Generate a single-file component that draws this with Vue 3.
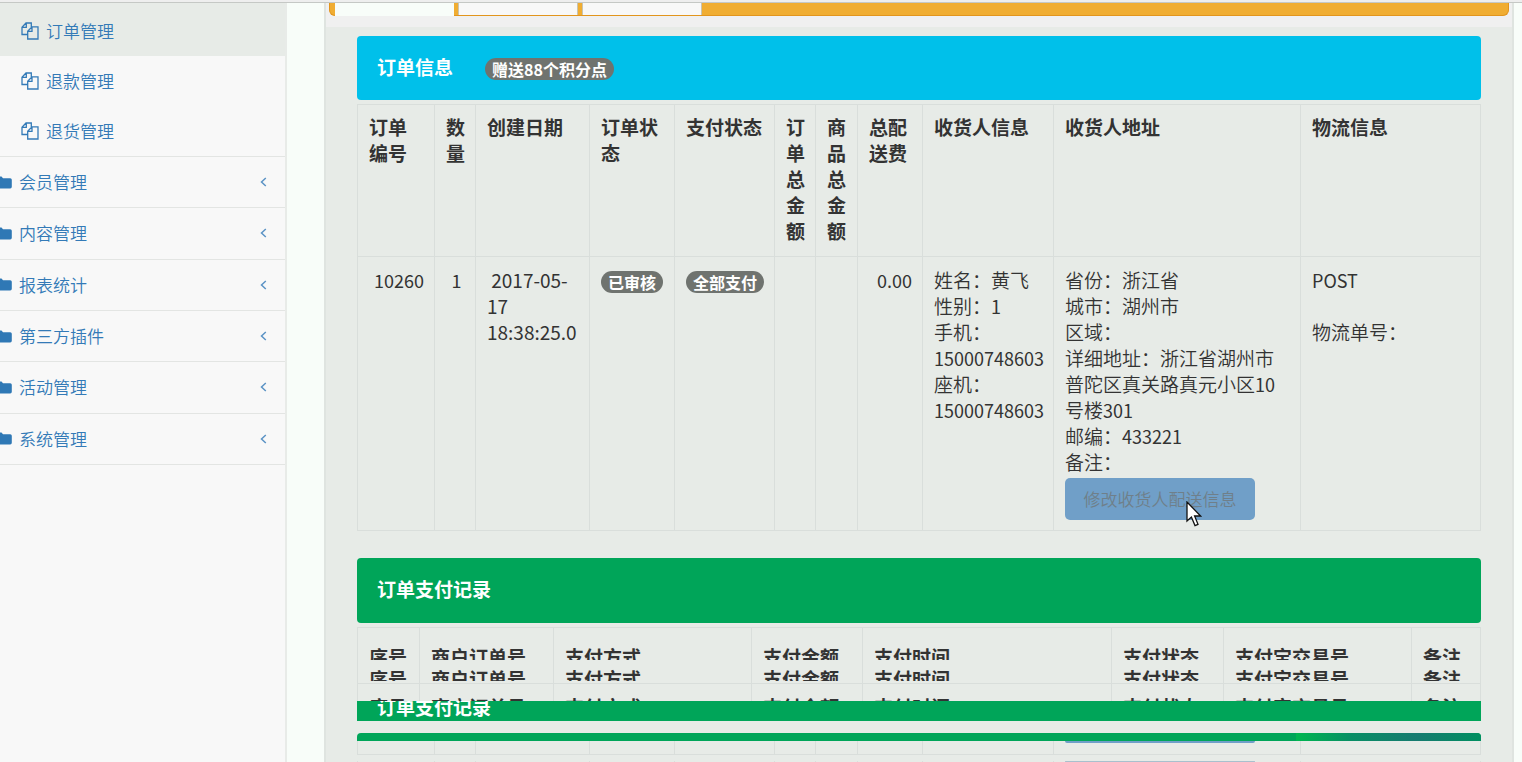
<script setup>
const orderLinks = ['订单管理', '退款管理', '退货管理']
const groups = ['会员管理', '内容管理', '报表统计', '第三方插件', '活动管理', '系统管理']
const orderColumns = [
  ['c-no', '订单编号'], ['c-qty', '数量'], ['c-date', '创建日期'], ['c-state', '订单状态'],
  ['c-pay', '支付状态'], ['c-sum', '订单总金额'], ['c-goods', '商品总金额'], ['c-fee', '总配送费'],
  ['c-person', '收货人信息'], ['c-address', '收货人地址'], ['c-ship', '物流信息'],
]
const payColumns = [
  ['p-seq', '序号'], ['p-order', '商户订单号'], ['p-way', '支付方式'], ['p-money', '支付金额'],
  ['p-time', '支付时间'], ['p-state', '支付状态'], ['p-trade', '支付宝交易号'], ['p-note', '备注'],
]
const slices = ['first', 'second', 'third']
</script>

<template>
  <div class="page">
    <div class="topline"></div>
    <aside class="sidebar">
      <nav>
        <ul class="sub">
          <li v-for="(name, i) in orderLinks" :key="name" :class="{ active: i === 0 }">
            <a href="#">
              <svg class="copy" viewBox="0 0 18 18" aria-hidden="true">
                <path d="M6.5 12.5H1V5.2L5 1H10.3V5M5.3 1V5.3H1M6.7 9.2L11 4.8H17V17H6.7ZM11 4.8V9.3H6.7" />
              </svg>
              <span>{{ name }}</span>
            </a>
          </li>
        </ul>
        <ul class="groups">
          <li v-for="name in groups" :key="name">
            <a href="#">
              <svg class="folder" viewBox="0 0 12 13" aria-hidden="true">
                <path d="M0 0.5H1.5L3 2.2H10.2Q11.8 2.2 11.8 3.8V10.8Q11.8 12.4 10.2 12.4H0Z" />
              </svg>
              <span>{{ name }}</span>
              <svg class="chev" viewBox="0 0 7 10" aria-hidden="true"><path d="M5.8 1L1.5 5L5.8 9" /></svg>
            </a>
          </li>
        </ul>
      </nav>
    </aside>

    <main class="main">
      <header class="tabs-wrap">
        <div class="tabs"><i class="on"></i><i></i><i></i></div>
      </header>
      <div class="content">
        <h2 class="banner info">订单信息 <span class="badge">赠送88个积分点</span></h2>
        <table class="order">
          <colgroup><col v-for="(c, i) in orderColumns" :key="i" :class="c[0]" /></colgroup>
          <thead>
            <tr><th v-for="(c, i) in orderColumns" :key="i">{{ c[1] }}</th></tr>
          </thead>
          <tbody>
            <tr>
              <td class="right"><span class="num">10260</span></td>
              <td class="center"><span class="num">1</span></td>
              <td class="date">&nbsp;2017-05-<br />17<br />18:38:25.0</td>
              <td><span class="badge">已审核</span></td>
              <td><span class="badge">全部支付</span></td>
              <td></td>
              <td></td>
              <td class="right"><span class="num">0.00</span></td>
              <td>
                姓名：黄飞<br />性别：<span class="num">1</span><br />
                手机：<br /><span class="num">15000748603</span><br />
                座机：<br /><span class="num">15000748603</span>
              </td>
              <td class="address">
                省份：浙江省<br />城市：湖州市<br />区域：<br />
                详细地址：浙江省湖州市普陀区真关路真元小区<span class="num">10</span>号楼<span class="num">301</span><br />
                邮编：<span class="num">433221</span><br />备注：
                <div class="action">
                  <button type="button" disabled>修改收货人配送信息</button>
                  <svg class="cursor" viewBox="0 0 16 27" aria-hidden="true">
                    <path d="M1 1V20L5.4 16L9 24.6L12 23.3L8.6 15H14.6Z" />
                  </svg>
                </div>
              </td>
              <td><span class="num">POST</span><br /><br />物流单号：</td>
            </tr>
          </tbody>
        </table>

        <h2 class="banner success">订单支付记录</h2>
        <table class="pay">
          <colgroup><col v-for="c in payColumns" :key="c[0]" :class="c[0]" /></colgroup>
          <tbody>
            <tr v-for="s in slices" :key="s" :class="s">
              <th v-for="c in payColumns" :key="c[0]"><div class="slice">{{ c[1] }}</div></th>
            </tr>
          </tbody>
        </table>
        <div class="strip"><span>订单支付记录</span></div>
        <div class="thin"><i></i></div>
        <table class="order tail">
          <colgroup><col v-for="(c, i) in orderColumns" :key="i" :class="c[0]" /></colgroup>
          <tbody>
            <tr><td v-for="(c, i) in orderColumns" :key="i"><i v-if="c[0] === 'c-address'" class="edge"></i></td></tr>
          </tbody>
        </table>
        <table class="order tail next">
          <colgroup><col v-for="(c, i) in orderColumns" :key="i" :class="c[0]" /></colgroup>
          <tbody>
            <tr><td v-for="(c, i) in orderColumns" :key="i"><i v-if="c[0] === 'c-address'" class="edge"></i></td></tr>
          </tbody>
        </table>
      </div>
    </main>
  </div>
</template>

<style>
body { margin: 0; background: #f8fdf9; }
</style>

<style scoped>
* { box-sizing: border-box; }
.page {
  display: grid;
  grid-template-columns: 287px minmax(0, 1fr);
  grid-template-rows: 3px minmax(0, 1fr);
  height: 100vh;
  overflow: hidden;
  background: #f8fdf9;
  color: #333;
  font: 19px/26px "Noto Sans CJK SC", sans-serif;
}
.topline { grid-column: 1 / -1; background: #eee; border-bottom: 1px solid #c5c8c5; }
.sidebar { background: #f8f8f8; border-right: 2px solid #e8ebe8; overflow: hidden; }
ul { list-style: none; margin: 0; padding: 0; }
.sidebar a { display: flex; align-items: center; height: 100%; color: #337ab7; text-decoration: none; font-size: 17px; font-weight: 350; }
.sub li { height: 50px; }
.sub li.active { height: 53px; background: #e7ebe7; }
.sub a { padding: 0 0 0 21px; gap: 7px; }
.sub .active a { padding-top: 3px; }
.copy { width: 18px; height: 18px; fill: none; stroke: #337ab7; stroke-width: 1.3; }
.groups { display: grid; grid-auto-rows: 1fr; height: 309px; border-bottom: 1px solid #e3e5e3; }
.groups li { border-top: 1px solid #e3e5e3; }
.groups a { padding-right: 18px; gap: 7px; }
.folder { width: 12px; height: 13px; fill: #2f78b5; }
.chev { width: 7px; height: 10px; margin-left: auto; fill: none; stroke: #5b93c5; stroke-width: 1.5; }

.main { display: flex; flex-direction: column; margin: 0 8px 0 37px; border: solid #dfe4e0; border-width: 0 2px; background: #e7ebe7; overflow: hidden; }
.tabs-wrap { flex: none; height: 24px; padding: 0 3px; background: #f0f0f0; }
.tabs { display: flex; gap: 4px; height: 13px; padding-left: 5px; border: solid #e2951d; border-width: 0 1px 1px; border-radius: 0 0 6px 6px; background: #f0ad32; }
.tabs i { width: 120px; background: #f8f8f8; border: solid #c9c3b0; border-width: 0 1px; }
.tabs .on { width: 119px; background: #f8fdf9; border-color: #f8fdf9; height: 13px; }
.content { padding: 9px 31px 0; flex: none; }
.banner { display: flex; align-items: flex-start; gap: 32px; margin: 0; padding: 18px 20px; border-radius: 4px; color: #fff; font-size: 19px; line-height: 26px; font-weight: 700; }
.info { height: 64px; background: #00c0ea; margin-bottom: 4px; }
.success { height: 65px; background: #00a559; margin: 27px 0 4px; }
.badge { display: inline-block; padding: 0 7px; border-radius: 12px; background: #6f736f; color: #fff; font-size: 16px; line-height: 22px; font-weight: 700; }
.banner .badge { margin-top: 4px; }
td .badge { vertical-align: top; margin-top: 4px; }
table { width: 100%; table-layout: fixed; border-collapse: collapse; }
th, td { border: 1px solid #d9dedb; vertical-align: top; text-align: left; padding: 9px 6px 10px 11px; overflow: hidden; }
td { padding-top: 10px; padding-right: 8px; font-weight: 350; }
.order th { height: 152px; }
.order th:first-child { padding-right: 12px; }
.num { font-size: 18px; font-weight: 400; white-space: nowrap; }
.date { font-weight: 400; white-space: nowrap; }
td.right { text-align: right; padding-right: 10px; }
td.center { text-align: center; }
td.address { padding-right: 20px; }
.c-no { width: 77px; }
.c-qty { width: 41px; }
.c-date { width: 114px; }
.c-state { width: 85px; }
.c-pay { width: 100px; }
.c-sum { width: 41px; }
.c-goods { width: 42px; }
.c-fee { width: 65px; }
.c-person { width: 131px; }
.c-address { width: 247px; }
.c-ship { width: 180px; }
.action { position: relative; margin-top: 3px; height: 42px; }
button { width: 190px; height: 42px; padding: 0; border: 0; border-radius: 5px; background: #709fc8; color: #6f7f8a; font: 350 17px/26px "Noto Sans CJK SC", sans-serif; }
.cursor { position: absolute; left: 121px; top: 23px; width: 16px; height: 27px; fill: #fff; stroke: #111; stroke-width: 1.3; }
.p-seq { width: 62px; }
.p-order { width: 134px; }
.p-way { width: 198px; }
.p-money { width: 111px; }
.p-time { width: 249px; }
.p-state { width: 112px; }
.p-trade { width: 188px; }
.p-note { width: 69px; }
.pay th { padding-bottom: 0; padding-right: 0; }
.slice { overflow: hidden; white-space: nowrap; }
.pay .first th { padding-top: 16px; border-bottom: 0; }
.first .slice { height: 16px; }
.pay .second th { padding-top: 6px; padding-bottom: 2px; border-top: 0; }
.second .slice { height: 15px; }
.pay .third th { padding-top: 10px; border-bottom: 0; }
.third .slice { height: 7px; }
.strip { display: flex; align-items: center; height: 20px; padding-left: 20px; overflow: hidden; background: #00a559; color: #fff; font-weight: 700; }
.strip span { margin-top: -9px; }
.thin { display: flex; justify-content: flex-end; height: 8px; margin-top: 12px; border-radius: 4px 4px 0 0; background: #00a559; overflow: hidden; }
.thin i { width: 185px; background: linear-gradient(90deg, #00b750, #088e65 30%, #167b70 65%, #008f60); }
.tail td { height: 13px; padding-top: 0; padding-bottom: 0; border-top: 0; }
.edge { display: block; width: 190px; height: 2px; margin-bottom: 10px; background: #709fc8; border-radius: 0 0 5px 5px; }
.next { margin-top: 6px; }
.next .edge { background: #a9c0cd; }
</style>
